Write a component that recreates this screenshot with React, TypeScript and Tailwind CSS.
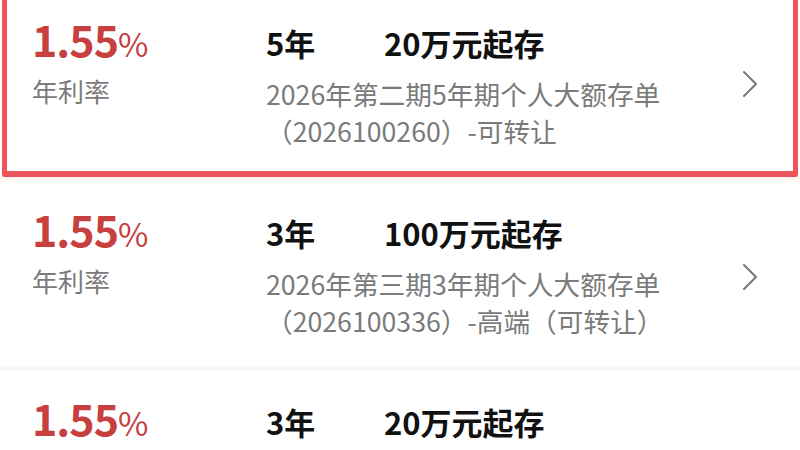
import { ChevronRight } from "lucide-react";

type Deposit = {
  rate: string;
  term: string;
  amount: string;
  name: string;
  code: string;
  active?: boolean;
};

const deposits: Deposit[] = [
  {
    rate: "1.55",
    term: "5年",
    amount: "20万元起存",
    name: "2026年第二期5年期个人大额存单",
    code: "（2026100260）-可转让",
    active: true,
  },
  {
    rate: "1.55",
    term: "3年",
    amount: "100万元起存",
    name: "2026年第三期3年期个人大额存单",
    code: "（2026100336）-高端（可转让）",
  },
  {
    rate: "1.55",
    term: "3年",
    amount: "20万元起存",
    name: "2026年第一期3年期个人大额存单",
    code: "（2026100120）-可转让",
  },
];

const FONT = "font-['Noto_Sans_CJK_SC','Noto_Sans',sans-serif]";

function DepositCard({ d }: { d: Deposit }) {
  return (
    <div
      className={`flex items-start bg-white ${
        d.active
          ? "-mt-[4px] h-[181px] rounded-b-[3px] border-x-[5px] border-b-[6px] border-[#e9555b] pl-[25px] pt-[18px]"
          : "h-[189px] border-b-[4px] border-[#f8f8f8] pl-[32px] pt-[22px]"
      }`}
    >
      {/* 利率 */}
      <div className="w-[234px] shrink-0">
        <div className="flex items-baseline leading-[48px]">
          <span className="text-[43px] font-bold tracking-[-1px] text-[#c7403f]">
            {d.rate}
          </span>
          <span className="text-[33px] font-normal text-[#c7403f]">%</span>
        </div>
        <div className="mt-[8px] text-[26px] leading-[32px] text-[#7b7b7b]">
          年利率
        </div>
      </div>

      {/* 产品信息 */}
      <div className="flex-1 min-w-0 pt-[9px]">
        <div className="flex text-[31px] font-bold leading-[40px] text-[#111111]">
          <span className="w-[118px] shrink-0">{d.term}</span>
          <span>{d.amount}</span>
        </div>
        <div className="mt-[12px] text-[26.7px] leading-[37px] text-[#7b7b7b] whitespace-nowrap">
          <div>{d.name}</div>
          <div>{d.code}</div>
        </div>
      </div>

      <div
        className={`flex shrink-0 items-center self-stretch pb-[17px] ${
          d.active ? "w-[67px]" : "w-[74px]"
        }`}
      >
        <ChevronRight size={48} strokeWidth={1} className="text-[#777777]" />
      </div>
    </div>
  );
}

export default function App() {
  return (
    <div className={`h-[450px] w-[800px] overflow-hidden bg-white ${FONT}`}>
      <div className="flex flex-col">
        <div className="px-[2px]">
          <DepositCard d={deposits[0]} />
        </div>
        <div className="h-[5px] bg-[#fcf7f3]" />
        <DepositCard d={deposits[1]} />
        <DepositCard d={deposits[2]} />
      </div>
    </div>
  );
}
